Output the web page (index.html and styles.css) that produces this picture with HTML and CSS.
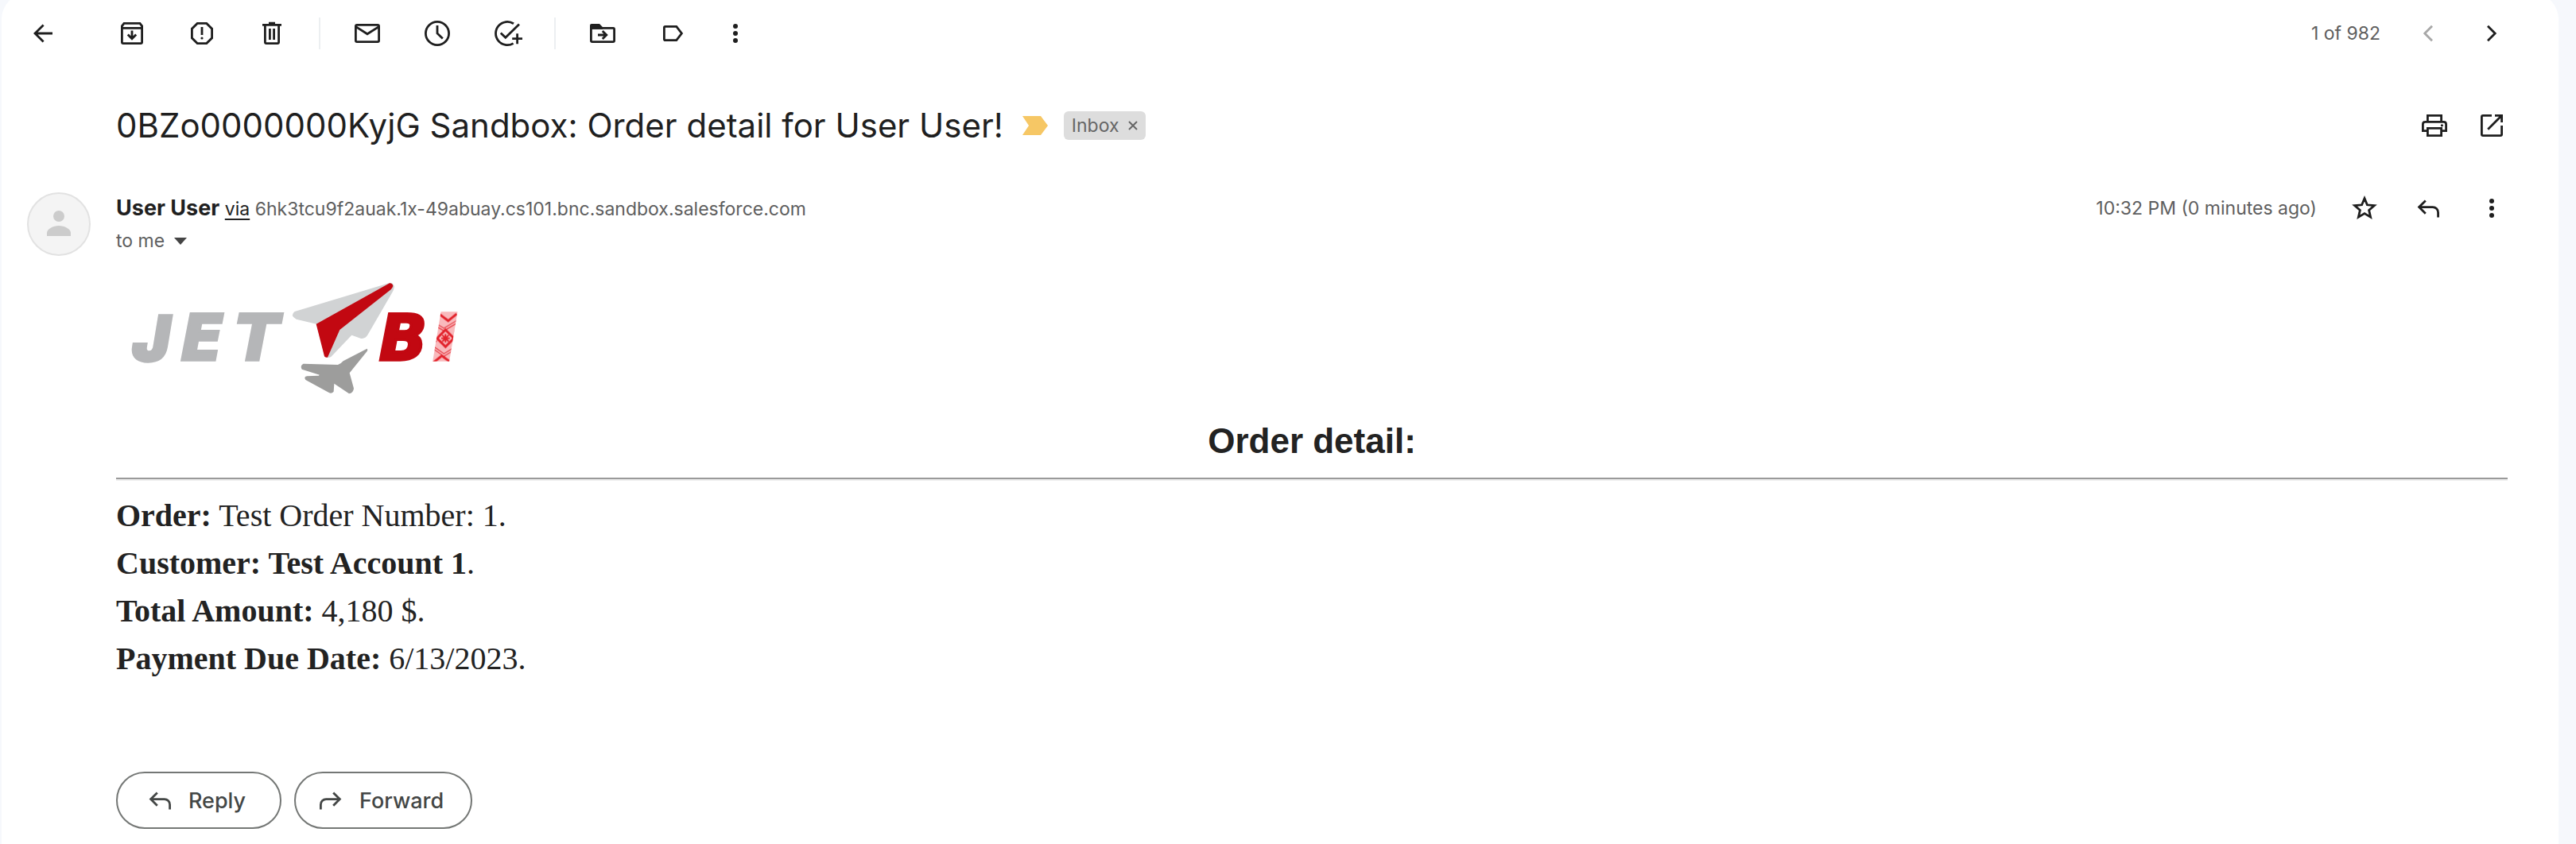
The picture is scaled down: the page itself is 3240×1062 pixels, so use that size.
FILE: index.html
```html
<!DOCTYPE html>
<html lang="en">
<head>
<meta charset="utf-8">
<title>Order detail for User User!</title>
<link rel="stylesheet" href="styles.css">
</head>
<body>
<svg class="defs" width="0" height="0" aria-hidden="true">
  <symbol id="i-reply" viewBox="0 0 20 20"><path d="M16.3 15.7v-3a3.4 3.4 0 0 0-3.4-3.4H4.3M8.4 5.2L4.3 9.3l4.1 4.1"/></symbol>
  <symbol id="i-more" viewBox="0 0 20 20"><g fill="currentColor" stroke="none"><circle cx="10" cy="5.5" r="1.5"/><circle cx="10" cy="10" r="1.5"/><circle cx="10" cy="14.5" r="1.5"/></g></symbol>
</svg>
<main class="panel">
  <div class="toolbar" role="toolbar" aria-label="Message actions">
    <button class="icon-btn back" aria-label="Back to Inbox"><svg class="icon" viewBox="0 0 20 20"><path d="M16 10H5M10.3 4.7L5 10l5.3 5.3"/></svg></button>
    <div class="group">
      <button class="icon-btn" aria-label="Archive"><svg class="icon" viewBox="0 0 20 20"><path d="M3.7 6.7h12.6v8.8q0 .8-.8.8h-11q-.8 0-.8-.8V5.4L5 3.7h10l1.3 1.7v1.3M10 8.2v5.2M7.4 10.8l2.6 2.6 2.6-2.6"/></svg></button>
      <button class="icon-btn" aria-label="Report spam"><svg class="icon" viewBox="0 0 20 20"><path d="M7.1 3.7h5.8l3.4 3.4v5.8l-3.4 3.4H7.1l-3.4-3.4V7.1zM10 6v5"/><circle cx="10" cy="13" r=".8" fill="currentColor" stroke="none"/></svg></button>
      <button class="icon-btn" aria-label="Delete"><svg class="icon" viewBox="0 0 20 20"><path d="M4 4.7h12M8 3.6h4M5.7 5v10.5q0 .8.8.8h7q.8 0 .8-.8V5M8.7 7v7M11.3 7v7"/></svg></button>
    </div>
    <span class="divider"></span>
    <div class="group">
      <button class="icon-btn" aria-label="Mark as unread"><svg class="icon" viewBox="0 0 20 20"><path d="M3.5 4.7h13q.8 0 .8.8v9q0 .8-.8.8h-13q-.8 0-.8-.8v-9q0-.8.8-.8zM2.8 5.8l7.2 4.6 7.2-4.6"/></svg></button>
      <button class="icon-btn" aria-label="Snooze"><svg class="icon" viewBox="0 0 20 20"><circle cx="10" cy="10" r="7.3"/><path d="M10 5v5l3.4 3.2"/></svg></button>
      <button class="icon-btn" aria-label="Add to Tasks"><svg class="icon" viewBox="0 0 20 20"><path d="M14 3.9A7.3 7.3 0 1 0 13.8 16.3M5.9 9.7l3 2.9L17.5 4.2M16.3 10.1v6.5M13.1 13.3h6.4"/></svg></button>
    </div>
    <span class="divider"></span>
    <div class="group">
      <button class="icon-btn" aria-label="Move to"><svg class="icon" viewBox="0 0 20 20"><path d="M2.7 6.7h14q.6 0 .6.8v7q0 .8-.8.8h-13q-.8 0-.8-.8zM7 11h5.4M9.9 8.5l2.5 2.5-2.5 2.5"/><path d="M2 7.4V5q0-1 1-1h5l2.2 2.2v1.2z" fill="currentColor" stroke="none"/></svg></button>
      <button class="icon-btn" aria-label="Labels"><svg class="icon" viewBox="0 0 20 20"><path d="M5.4 5.7h7l3.3 4.3-3.3 4.3h-7q-.7 0-.7-.7V6.4q0-.7.7-.7z"/></svg></button>
    </div>
    <button class="icon-btn" aria-label="More"><svg class="icon"><use href="#i-more"/></svg></button>
    <div class="pager">
      <span class="count">1 of 982</span>
      <button class="icon-btn" aria-label="Newer" disabled><svg class="icon" viewBox="0 0 20 20"><path d="M12.5 5.4L7.9 10l4.6 4.6"/></svg></button>
      <button class="icon-btn" aria-label="Older"><svg class="icon" viewBox="0 0 20 20"><path d="M7.5 5.4l4.6 4.6-4.6 4.6"/></svg></button>
    </div>
  </div>

  <header class="subject-row">
    <h1 class="subject">0BZo0000000KyjG Sandbox: Order detail for User User!</h1>
    <svg class="marker" viewBox="0 0 32 24" role="img" aria-label="Important"><path d="M0 0h23l9 12-9 12H0l8-12z"/></svg>
    <span class="chip">Inbox<button class="chip-x" aria-label="Remove label Inbox"><svg viewBox="0 0 12 12"><path d="M1 1l10 10M11 1L1 11"/></svg></button></span>
    <div class="actions right">
      <button class="icon-btn" aria-label="Print"><svg class="icon" viewBox="0 0 20 20"><path d="M5.7 7.5V3.7h8.6v3.8M5.5 13.3H2.7V9.2q0-1.5 1.5-1.5h11.6q1.5 0 1.5 1.5v4.1h-2.8M5.7 11.7h8.6v4.6H5.7z"/><circle cx="14.7" cy="9.9" r=".8" fill="currentColor" stroke="none"/></svg></button>
      <button class="icon-btn" aria-label="Open in new window"><svg class="icon" viewBox="0 0 20 20"><path d="M10 3.7H4.5q-.8 0-.8.8v11q0 .8.8.8h11q.8 0 .8-.8V10M12 3.7h4.3V8M16.2 3.8l-8.6 8.6"/></svg></button>
    </div>
  </header>

  <section class="message">
    <svg class="avatar" viewBox="0 0 80 80" role="img" aria-label="User User"><circle class="avatar-bg" cx="40" cy="40" r="39"/><circle cx="40" cy="30" r="7"/><path d="M25 55v-4c0-5 8-9 15-9s15 4 15 9v4z"/></svg>
    <div class="content">
      <div class="meta">
        <div class="sender">
          <p class="from"><strong class="name">User User</strong> <a class="via" href="#via">via</a> 6hk3tcu9f2auak.1x-49abuay.cs101.bnc.sandbox.salesforce.com</p>
          <button class="to">to me <span class="caret"></span></button>
        </div>
        <div class="actions">
          <time class="date">10:32 PM (0 minutes ago)</time>
          <button class="icon-btn" aria-label="Star"><svg class="icon" viewBox="0 0 20 20"><path d="M10 3.8l1.7 4.1 4.5.4-3.4 2.9 1 4.4-3.8-2.3-3.8 2.3 1-4.4-3.4-2.9 4.5-.4z"/></svg></button>
          <button class="icon-btn" aria-label="Reply"><svg class="icon"><use href="#i-reply"/></svg></button>
          <button class="icon-btn" aria-label="More options"><svg class="icon"><use href="#i-more"/></svg></button>
        </div>
      </div>

      <svg class="logo" viewBox="-12 0 1362 510" role="img" aria-label="JET BI">
        <defs>
          <pattern id="ornament" width="120" height="200" patternUnits="userSpaceOnUse" x="1176" y="152">
            <rect width="120" height="200" fill="#f9b9bc"/>
            <g fill="none" stroke="#e2222b" transform="translate(9 10)">
              <path stroke-width="9" d="M46 60L78 92 46 124 14 92zM22 0l34 26L88 0M0 184l32-26 36 26"/>
              <path stroke-width="6" d="M34 80l24 24M58 80l-24 24M46 76v32M30 92h32"/>
              <path stroke-width="3" d="M0 30l40 24 60-36M0 40l40 24 60-36M0 122l40 28 60-36M0 132l40 28 60-36M0 60l14 10M80 66l20-12M0 110l14-8M80 116l20 10"/>
            </g>
          </pattern>
        </defs>
        <g class="gray"><text class="word" x="50" y="338">J</text><text class="word wide" x="232" y="337">E</text><text class="word wide" x="438" y="337">T</text></g>
        <text class="word wide red" x="980" y="337">B</text>
        <text class="word ornament" x="1192" y="334">I</text>
        <path fill="#d1d3d4" d="M662 153L1020 45q14-2 18 14-2 12-8 22L938 240q-10 18-28 14l-33-12-78 82q-14 8-24-4L744 200l-76-18q-26-14-6-29z"/>
        <path fill="#c20811" d="M743 200L1020 46q10 0 13 10-2 8-8 14L832 222l-46 104q-12 2-13-8z"/>
        <path fill="#9d9d9c" d="M935 293q4 4 0 10l-66 82 16 58q-2 18-18 20l-56-38-2 30q-8 10-18 4l-88-48q-8-12 6-14l44-2q4-4-2-4l-62-20q-8-14 6-21l130 4q10-2 20-14z"/>
      </svg>

      <h2 class="title">Order detail:</h2>
      <hr class="rule">
      <div class="details">
        <p><b>Order:</b> Test Order Number: 1.</p>
        <p><b>Customer: Test Account 1</b>.</p>
        <p><b>Total Amount:</b> 4,180 $.</p>
        <p><b>Payment Due Date:</b> 6/13/2023.</p>
      </div>

      <div class="replies">
        <button class="pill"><svg class="icon"><use href="#i-reply"/></svg>Reply</button>
        <button class="pill"><svg class="icon flip"><use href="#i-reply"/></svg>Forward</button>
      </div>
    </div>
  </section>
</main>
</body>
</html>
```
FILE: styles.css
```css
* { box-sizing: border-box; }

body {
  display: flow-root;
  margin: 0;
  padding: 0 22px 0 2px;
  background: #f6f8fc;
  color: #1f1f1f;
  font-family: Inter, "Liberation Sans", sans-serif;
  font-size: 23px;
}

h1, h2, p { margin: 0; }

button {
  margin: 0;
  padding: 0;
  border: 0;
  background: none;
  color: inherit;
  font: inherit;
}

.defs { position: absolute; }

.panel {
  min-height: calc(100vh + 8px);
  margin-top: -8px;
  padding-top: 8px;
  border-radius: 32px 32px 0 0;
  background: #fff;
}

/* icons */
.icon {
  display: block;
  flex: none;
  width: 40px;
  height: 40px;
  fill: none;
  stroke: currentColor;
  stroke-width: 1.4;
}
.flip { transform: scaleX(-1); }
.icon-btn { flex: none; }
.icon-btn:disabled { color: #a8a8a8; }

/* toolbar */
.toolbar {
  display: flex;
  align-items: center;
  gap: 39px;
  height: 84px;
  padding: 0 64px 0 32px;
}
.back { margin-right: 33px; }
.group { display: flex; gap: 48px; }
.divider {
  width: 2px;
  height: 40px;
  background: #eceff1;
}
.pager {
  display: flex;
  align-items: center;
  gap: 40px;
  margin-left: auto;
}
.count, .date { color: #5e5e5e; }

/* subject */
.subject-row {
  display: flex;
  align-items: center;
  margin-top: 46px;
  padding: 0 64px 0 144px;
}
.subject {
  font-size: 42px;
  font-weight: 400;
  line-height: 56px;
}
.marker {
  width: 32px;
  height: 24px;
  margin: 0 20px 0 24px;
  fill: #f6c765;
}
.chip {
  display: flex;
  align-items: center;
  gap: 12px;
  height: 36px;
  padding: 0 10px;
  border-radius: 6px;
  background: #ddd;
  color: #666;
}
.chip-x svg {
  display: block;
  width: 12px;
  height: 12px;
  stroke: #666;
  stroke-width: 2;
}
.actions {
  display: flex;
  align-items: center;
  gap: 40px;
}
.right {
  gap: 32px;
  margin-left: auto;
}

/* message */
.message {
  display: flex;
  gap: 32px;
  margin-top: 56px;
  padding: 0 64px 0 32px;
}
.avatar {
  flex: none;
  width: 80px;
  height: 80px;
  fill: #ccc;
}
.avatar-bg {
  fill: #f4f4f4;
  stroke: #e2e2e2;
  stroke-width: 2;
}
.content { flex: 1; }
.meta {
  display: flex;
  justify-content: space-between;
  align-items: flex-start;
}
.from, .to {
  color: #5e5e5e;
  line-height: 40px;
}
.name {
  color: #1f1f1f;
  font-size: 27px;
}
.via {
  color: #222;
  text-underline-offset: 4px;
}
.to {
  display: flex;
  align-items: center;
  gap: 12px;
}
.caret {
  border: 8px solid transparent;
  border-top: 9px solid #444;
  border-bottom: 0;
}

.logo {
  display: block;
  width: 454px;
  height: 170px;
  margin-top: 18px;
}
.word {
  font: italic 900 236px Inter, "Liberation Sans", sans-serif;
  stroke-width: 10;
}
.wide {
  font: italic 700 238px "DejaVu Sans", sans-serif;
}
.gray { fill: #b5b6b8; stroke: #b5b6b8; }
.red { fill: #c20811; stroke: #c20811; }
.ornament {
  fill: url(#ornament);
  stroke: url(#ornament);
  stroke-width: 16;
}

.title {
  margin-top: 18px;
  color: #222;
  font: bold 44px/52px "Liberation Sans", Arial, sans-serif;
  text-align: center;
}
.rule {
  height: 4px;
  margin: 20px 0 14px;
  border: solid #eee;
  border-width: 2px 0;
  border-top-color: #9a9a9a;
}
.details {
  color: #222;
  font: 40px/60px "Liberation Serif", "Times New Roman", serif;
}

.replies {
  display: flex;
  gap: 16px;
  margin-top: 112px;
}
.pill {
  display: flex;
  align-items: center;
  justify-content: center;
  gap: 16px;
  min-width: 208px;
  height: 72px;
  padding: 0 34px 0 24px;
  border: 2px solid #747775;
  border-radius: 36px;
  color: #444746;
  font-size: 27px;
  font-weight: 500;
}
```
